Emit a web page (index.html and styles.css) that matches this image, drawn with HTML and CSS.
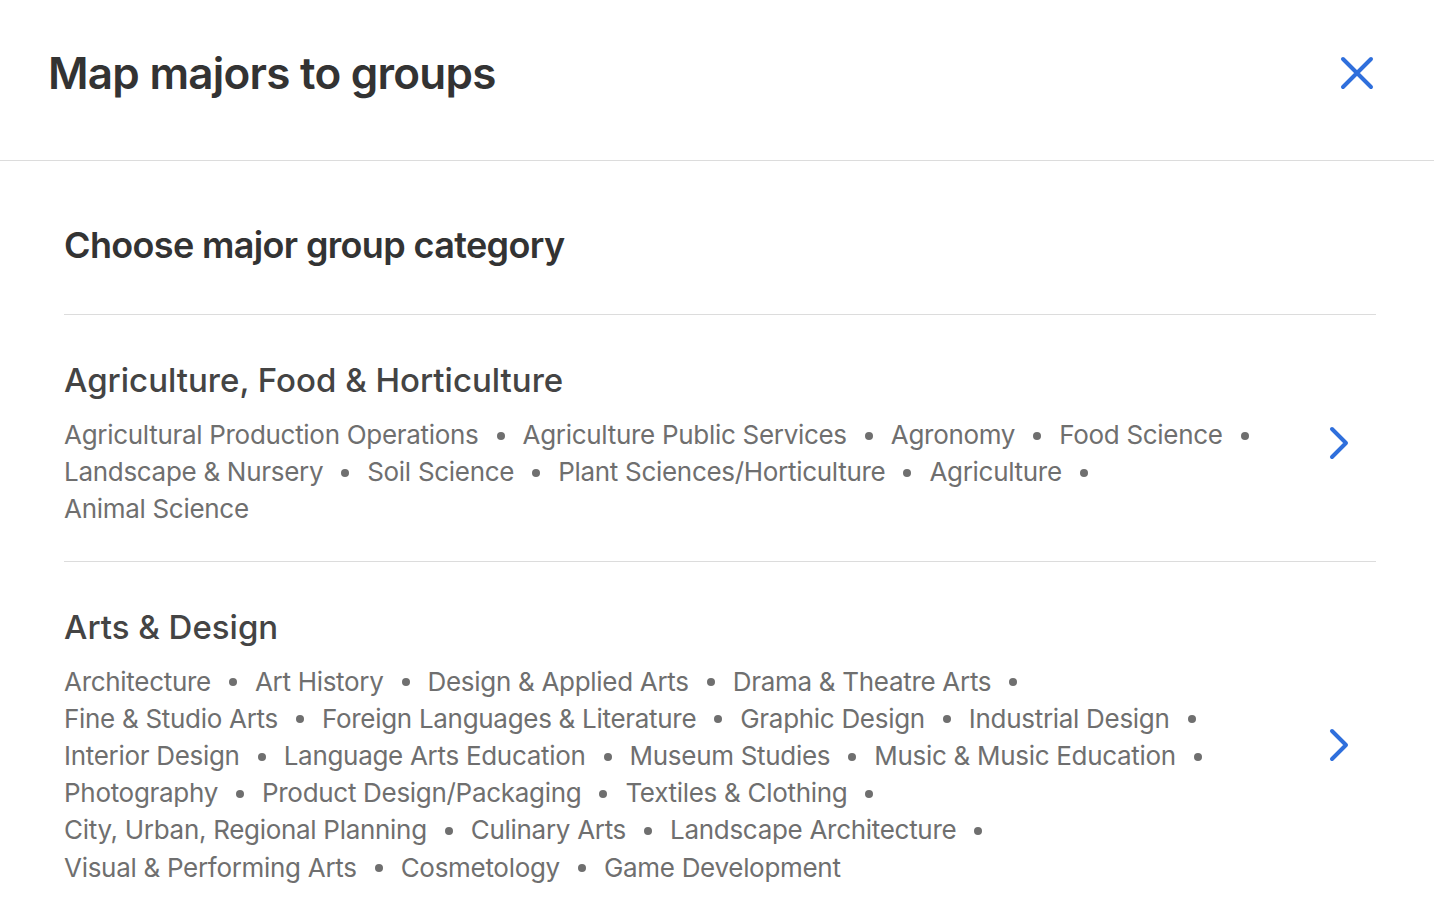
FILE: index.html
```html
<!DOCTYPE html>
<html lang="en">
<head>
<meta charset="utf-8">
<title>Map majors to groups</title>
<link rel="stylesheet" href="styles.css">
</head>
<body>
<div class="modal">
  <header class="modal-header">
    <h1 class="modal-title">Map majors to groups</h1>
    <button class="close-btn" aria-label="Close">
      <svg width="34" height="34" viewBox="0 0 34 34" fill="none" stroke="currentColor" stroke-width="4" stroke-linecap="round">
        <path d="M3 3 L31 31 M31 3 L3 31"/>
      </svg>
    </button>
  </header>
  <main class="modal-body">
    <h2 class="subtitle">Choose major group category</h2>
    <div class="group">
      <div class="group-content">
        <h3 class="group-title">Agriculture, Food &amp; Horticulture</h3>
        <div class="majors">
          <span class="major">Agricultural Production Operations</span>
          <span class="major">Agriculture Public Services</span>
          <span class="major">Agronomy</span>
          <span class="major">Food Science</span>
          <span class="major">Landscape &amp; Nursery</span>
          <span class="major">Soil Science</span>
          <span class="major">Plant Sciences/Horticulture</span>
          <span class="major">Agriculture</span>
          <span class="major">Animal Science</span>
        </div>
      </div>
      <div class="chevron">
        <svg width="22" height="34" viewBox="0 0 22 34" fill="none" stroke="currentColor" stroke-width="4" stroke-linecap="round" stroke-linejoin="round">
          <path d="M4 3 L18 17 L4 31"/>
        </svg>
      </div>
    </div>
    <div class="group">
      <div class="group-content">
        <h3 class="group-title">Arts &amp; Design</h3>
        <div class="majors">
          <span class="major">Architecture</span>
          <span class="major">Art History</span>
          <span class="major">Design &amp; Applied Arts</span>
          <span class="major">Drama &amp; Theatre Arts</span>
          <span class="major">Fine &amp; Studio Arts</span>
          <span class="major">Foreign Languages &amp; Literature</span>
          <span class="major">Graphic Design</span>
          <span class="major">Industrial Design</span>
          <span class="major">Interior Design</span>
          <span class="major">Language Arts Education</span>
          <span class="major">Museum Studies</span>
          <span class="major">Music &amp; Music Education</span>
          <span class="major">Photography</span>
          <span class="major">Product Design/Packaging</span>
          <span class="major">Textiles &amp; Clothing</span>
          <span class="major">City, Urban, Regional Planning</span>
          <span class="major">Culinary Arts</span>
          <span class="major">Landscape Architecture</span>
          <span class="major">Visual &amp; Performing Arts</span>
          <span class="major">Cosmetology</span>
          <span class="major">Game Development</span>
        </div>
      </div>
      <div class="chevron">
        <svg width="22" height="34" viewBox="0 0 22 34" fill="none" stroke="currentColor" stroke-width="4" stroke-linecap="round" stroke-linejoin="round">
          <path d="M4 3 L18 17 L4 31"/>
        </svg>
      </div>
    </div>
  </main>
</div>
</body>
</html>
```

FILE: styles.css
```css
* { box-sizing: border-box; }
html, body { margin: 0; padding: 0; background: #fff; }
body {
  font-family: Inter, "Noto Sans", "Liberation Sans", sans-serif;
  color: #333;
  overflow: hidden;
}
.modal-header {
  height: 161px;
  display: flex;
  align-items: center;
  justify-content: space-between;
  padding: 0 60px 14px 48px;
  border-bottom: 1px solid #dcdcdc;
}
.modal-title {
  margin: 0;
  font-size: 44px;
  font-weight: 600;
  letter-spacing: -0.75px;
  color: #333;
}
.close-btn {
  border: 0;
  background: none;
  padding: 0;
  color: #2f6fdc;
  display: flex;
  cursor: pointer;
}
.modal-body {
  padding: 0 58px 0 64px;
}
.subtitle {
  margin: 0;
  height: 154px;
  display: flex;
  align-items: center;
  font-size: 36px;
  font-weight: 600;
  letter-spacing: -0.65px;
  color: #333;
  border-bottom: 1px solid #dcdcdc;
  padding-top: 14px;
}
.group {
  display: flex;
  align-items: center;
  border-bottom: 1px solid #dcdcdc;
  padding: 43px 0 33px;
}
.group-content {
  flex: 1;
}
.group-title {
  margin: 0 0 14px;
  font-size: 33px;
  line-height: 44px;
  font-weight: 500;
  letter-spacing: 0;
  color: #444;
}
.majors {
  display: flex;
  flex-wrap: wrap;
  font-size: 26px;
  line-height: 37.2px;
  letter-spacing: -0.3px;
  color: #6f6f6f;
}
.major {
  white-space: nowrap;
  display: inline-flex;
  align-items: center;
}
.major:not(:last-child)::after {
  content: "";
  width: 8px;
  height: 8px;
  border-radius: 50%;
  background: #6f6f6f;
  margin: 2px 18px 0 18px;
}
.chevron {
  width: 101px;
  display: flex;
  justify-content: flex-end;
  padding-right: 26px;
  color: #2f6fdc;
}
```
